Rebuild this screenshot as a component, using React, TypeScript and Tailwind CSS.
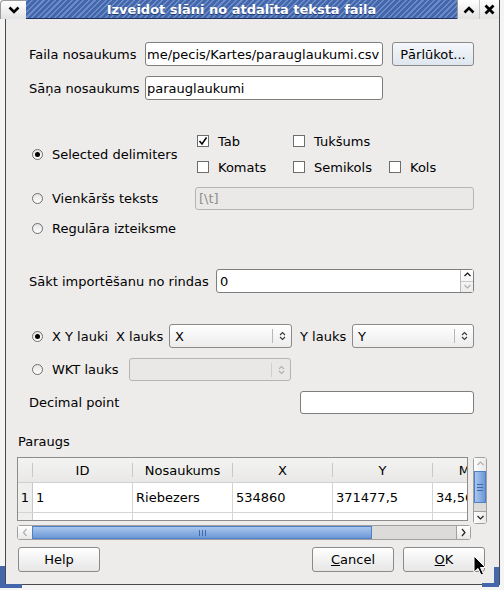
import React from "react"

function Radio({ checked = false }: { checked?: boolean }) {
  return (
    <span className="relative flex h-[11px] w-[11px] shrink-0 items-center justify-center rounded-full border border-[#6e6e6e] bg-gradient-to-b from-[#e4e4e4] to-white">
      {checked && <span className="h-[5px] w-[5px] rounded-full bg-black" />}
    </span>
  )
}

function Checkbox({ checked = false }: { checked?: boolean }) {
  return (
    <span className="flex h-[12px] w-[12px] shrink-0 items-center justify-center border border-[#6e6e6e] bg-white">
      {checked && (
        <svg width="10" height="10" viewBox="0 0 10 10">
          <path d="M1.5 5 L4 8 L8.5 1.5" stroke="#000" strokeWidth="1.5" fill="none" />
        </svg>
      )}
    </span>
  )
}

function UpDown({ color = "#3a3a3a" }: { color?: string }) {
  return (
    <svg width="7" height="10" viewBox="0 0 7 10">
      <path d="M1 4 L3.5 1.5 L6 4 M1 6 L3.5 8.5 L6 6" stroke={color} strokeWidth="1.1" fill="none" />
    </svg>
  )
}

function Combo({ value, width, disabled = false }: { value?: string; width: string; disabled?: boolean }) {
  return (
    <div
      className={`flex h-full items-center rounded-[3px] border ${width} ${
        disabled ? "border-[#b4b4b4] bg-[#e9e8e6]" : "border-[#8a8a8a] bg-gradient-to-b from-white to-[#ececec]"
      }`}
    >
      <span className="flex-1 pl-[5px]">{value}</span>
      <span className={`h-[14px] w-px ${disabled ? "bg-[#cfcfcf]" : "bg-[#b8b8b8]"}`} />
      <span className="flex w-[18px] justify-center">
        <UpDown color={disabled ? "#b0b0b0" : "#3a3a3a"} />
      </span>
    </div>
  )
}

function Button({ children, width = "w-[82px]", tint = false }: { children: React.ReactNode; width?: string; tint?: boolean }) {
  return (
    <div
      className={`flex h-full items-center justify-center rounded-[3px] border border-[#8a8a8a] ${width} ${
        tint ? "bg-gradient-to-b from-[#f4f7fb] to-[#dfe6ef]" : "bg-gradient-to-b from-white to-[#e6e6e6]"
      }`}
    >
      {children}
    </div>
  )
}

function Chevron({ dir, color = "#555" }: { dir: "up" | "down" | "left" | "right"; color?: string }) {
  const d = {
    up: "M1.5 5 L4.5 2 L7.5 5",
    down: "M1.5 3 L4.5 6 L7.5 3",
    left: "M5.5 1 L2.5 4.5 L5.5 8",
    right: "M3 1 L6 4.5 L3 8",
  }[dir]
  return (
    <svg width="9" height="9" viewBox="0 0 9 9">
      <path d={d} stroke={color} strokeWidth="1.2" fill="none" />
    </svg>
  )
}

function TitleBar() {
  return (
    <div className="flex h-[19px] w-[504px]">
      <div className="flex w-[26px] items-center justify-center rounded-tl-[4px] border-l border-t border-[#9a9a9a] bg-gradient-to-b from-white to-[#e2e2e2]">
        <svg width="12" height="8" viewBox="0 0 12 8">
          <path d="M1.5 1.5 L6 6 L10.5 1.5" stroke="#000" strokeWidth="2.6" fill="none" />
        </svg>
      </div>
      <div className="flex flex-1 items-center justify-center border-b border-[#1d2f5e] bg-[repeating-linear-gradient(135deg,#6b8cc9_0px,#6b8cc9_1.5px,#4466aa_1.5px,#4466aa_4px)]">
        <span className="text-[13px] font-bold text-white [text-shadow:0_1px_0_#223a70]">
          Izveidot slāni no atdalīta teksta faila
        </span>
      </div>
      <div className="flex w-[22px] items-center justify-center border-l border-[#9a9a9a] bg-gradient-to-b from-white to-[#e2e2e2]">
        <svg width="12" height="8" viewBox="0 0 12 8">
          <path d="M1.5 6.5 L6 2 L10.5 6.5" stroke="#000" strokeWidth="2.6" fill="none" />
        </svg>
      </div>
      <div className="flex w-[20px] items-center justify-center border-l border-[#c4c4c4] bg-gradient-to-b from-white to-[#e2e2e2]">
        <svg width="11" height="11" viewBox="0 0 11 11">
          <path d="M1.5 1.5 L9.5 9.5 M9.5 1.5 L1.5 9.5" stroke="#000" strokeWidth="2.8" fill="none" />
        </svg>
      </div>
      <div className="w-[5px] border-l border-[#4a4a4a] bg-[#f4f4f4]" />
    </div>
  )
}

const cols = [
  { head: "ID", cell: "1" },
  { head: "Nosaukums", cell: "Riebezers" },
  { head: "X", cell: "534860" },
  { head: "Y", cell: "371477,5" },
  { head: "Mērogs", cell: "34,5678" },
]

function Preview() {
  return (
    <div className="flex">
      <div className="ml-[11px] flex w-[454px] flex-col">
        <div className="h-[64px] w-[451px] overflow-hidden border border-[#8c8c8c] bg-white">
          <div className="flex h-[24px] bg-gradient-to-b from-[#f3f3f2] to-[#e9e8e6]">
            <div className="flex w-[15px] shrink-0 items-center justify-end">
              <span className="h-[14px] w-px bg-[#c8c8c8]" />
            </div>
            {cols.map((c) => (
              <div key={c.head} className="flex w-[100px] shrink-0 items-center">
                <span className="flex-1 text-center">{c.head}</span>
                <span className="h-[14px] w-px bg-[#c8c8c8]" />
              </div>
            ))}
          </div>
          <div className="flex h-[30px] border-t border-[#d0d0d0]">
            <div className="flex w-[15px] shrink-0 items-center justify-center border-r border-[#c8c8c8] bg-[#efefee]">1</div>
            {cols.map((c) => (
              <div key={c.head} className="flex w-[100px] shrink-0 items-center border-r border-[#d4d4d4] pl-[3px]">
                {c.cell}
              </div>
            ))}
          </div>
          <div className="flex h-[10px] border-t border-[#d4d4d4]">
            <div className="w-[15px] shrink-0 border-r border-[#c8c8c8] bg-[#efefee]" />
            {cols.map((c) => (
              <div key={c.head} className="w-[100px] shrink-0 border-r border-[#d4d4d4]" />
            ))}
          </div>
        </div>
        {/* horizontal scrollbar */}
        <div className="mt-[4px] flex h-[15px] w-[454px] rounded-[3px] border border-[#a0a0a0] bg-[#dcdbd9]">
          <div className="flex w-[14px] items-center justify-center bg-gradient-to-b from-white to-[#e8e8e8]">
            <Chevron dir="left" color="#b0b0b0" />
          </div>
          <div className="flex w-[340px] items-center justify-center border border-[#4f7fc6] bg-gradient-to-b from-[#a9c6ee] to-[#6d98d6]">
            <svg width="7" height="6" viewBox="0 0 7 6">
              <path d="M0.5 0 V6 M3.5 0 V6 M6.5 0 V6" stroke="#3d69ad" strokeWidth="1" />
            </svg>
          </div>
          <div className="flex-1" />
          <div className="flex w-[14px] items-center justify-center border-l border-[#a0a0a0] bg-gradient-to-b from-white to-[#e8e8e8]">
            <Chevron dir="right" color="#222" />
          </div>
        </div>
      </div>
      {/* vertical scrollbar */}
      <div className="ml-[2px] flex h-[67px] w-[14px] flex-col rounded-[3px] border border-[#a0a0a0] bg-[#dcdbd9]">
        <div className="flex h-[13px] items-center justify-center bg-gradient-to-r from-white to-[#e8e8e8]">
          <Chevron dir="up" color="#b0b0b0" />
        </div>
        <div className="flex h-[32px] items-center justify-center border border-[#4f7fc6] bg-gradient-to-r from-[#a9c6ee] to-[#6d98d6]">
          <svg width="6" height="7" viewBox="0 0 6 7">
            <path d="M0 0.5 H6 M0 3.5 H6 M0 6.5 H6" stroke="#3d69ad" strokeWidth="1" />
          </svg>
        </div>
        <div className="flex-1" />
        <div className="flex h-[12px] items-center justify-center border-t border-[#a0a0a0] bg-gradient-to-r from-white to-[#e8e8e8]">
          <Chevron dir="down" color="#222" />
        </div>
      </div>
    </div>
  )
}

export default function App() {
  return (
    <div className="relative h-[590px] w-[504px] overflow-hidden bg-[#f4f4f4] font-['DejaVu_Sans',sans-serif] text-[13px] leading-none text-black">
      <TitleBar />
      <div className="flex h-[571px]">
        <div className="w-[5px]" />
        <div className="flex h-[566px] w-[495px] flex-col border-x border-b border-[#4a4a4a] bg-[#edeceb]">
          {/* file name */}
          <div className="mt-[23px] flex h-[24px] items-center">
            <span className="ml-[23px] w-[116px]">Faila nosaukums</span>
            <div className="flex h-full w-[238px] items-center overflow-hidden whitespace-nowrap rounded-[3px] border border-[#7e7e7e] bg-white pl-[1px]">
              me/pecis/Kartes/parauglaukumi.csv
            </div>
            <div className="ml-[9px] h-full">
              <Button tint>Pārlūkot...</Button>
            </div>
          </div>

          {/* layer name */}
          <div className="mt-[10px] flex h-[24px] items-center">
            <span className="ml-[23px] w-[116px]">Sāņa nosaukums</span>
            <div className="flex h-full w-[238px] items-center rounded-[3px] border border-[#7e7e7e] bg-white pl-[1px]">
              parauglaukumi
            </div>
          </div>

          {/* delimiters */}
          <div className="mt-[31px] flex h-[46px] items-center">
            <div className="ml-[26px] flex w-[165px] items-center gap-[9px]">
              <Radio checked />
              <span>Selected delimiters</span>
            </div>
            <div className="grid grid-cols-[96px_96px_auto] grid-rows-[20px_20px] gap-y-[6px]">
              {[
                ["Tab", true],
                ["Tukšums", false],
                ["", false],
                ["Komats", false],
                ["Semikols", false],
                ["Kols", false],
              ].map(([label, on], i) =>
                label ? (
                  <div key={i} className="flex items-center gap-[9px]">
                    <Checkbox checked={on as boolean} />
                    <span>{label}</span>
                  </div>
                ) : (
                  <div key={i} />
                )
              )}
            </div>
          </div>

          <div className="mt-[10px] flex h-[23px] items-center">
            <div className="ml-[26px] flex w-[163px] items-center gap-[9px]">
              <Radio />
              <span>Vienkāršs teksts</span>
            </div>
            <div className="flex h-full w-[279px] items-center rounded-[3px] border border-[#b4b4b4] bg-[#eae9e7] pl-[3px] text-[#8e8e8e]">
              [\t]
            </div>
          </div>

          <div className="mt-[8px] flex h-[20px] items-center">
            <div className="ml-[26px] flex items-center gap-[9px]">
              <Radio />
              <span>Regulāra izteiksme</span>
            </div>
          </div>

          {/* start row */}
          <div className="mt-[31px] flex h-[24px] items-center">
            <span className="ml-[23px] w-[187px]">Sākt importēšanu no rindas</span>
            <div className="flex h-full w-[258px] rounded-[3px] border border-[#7e7e7e] bg-white">
              <span className="flex flex-1 items-center pl-[3px]">0</span>
              <div className="flex w-[13px] flex-col border-l border-[#b8b8b8] bg-gradient-to-b from-white to-[#ececec]">
                <div className="flex flex-1 items-center justify-center border-b border-[#c8c8c8]">
                  <Chevron dir="up" color="#111" />
                </div>
                <div className="flex flex-1 items-center justify-center">
                  <Chevron dir="down" color="#b0b0b0" />
                </div>
              </div>
            </div>
          </div>

          {/* geometry */}
          <div className="mt-[31px] flex h-[24px] items-center">
            <div className="ml-[26px] flex w-[84px] items-center gap-[9px]">
              <Radio checked />
              <span>X Y lauki</span>
            </div>
            <span className="w-[53px]">X lauks</span>
            <Combo value="X" width="w-[123px]" />
            <span className="ml-[8px] w-[52px]">Y lauks</span>
            <Combo value="Y" width="w-[122px]" />
          </div>

          <div className="mt-[10px] flex h-[23px] items-center">
            <div className="ml-[26px] flex w-[97px] items-center gap-[9px]">
              <Radio />
              <span>WKT lauks</span>
            </div>
            <Combo width="w-[162px]" disabled />
          </div>

          <div className="mt-[10px] flex h-[23px] items-center">
            <span className="ml-[23px] w-[271px]">Decimal point</span>
            <div className="h-full w-[174px] rounded-[3px] border border-[#7e7e7e] bg-white" />
          </div>

          <div className="mt-[19px] flex h-[16px] items-center">
            <span className="ml-[12px]">Paraugs</span>
          </div>

          <div className="mt-[8px]">
            <Preview />
          </div>

          {/* dialog buttons */}
          <div className="mt-[7px] flex h-[25px]">
            <div className="ml-[12px] h-full">
              <Button>Help</Button>
            </div>
            <div className="ml-auto h-full">
              <Button>
                <span>
                  <span className="underline">C</span>ancel
                </span>
              </Button>
            </div>
            <div className="ml-[9px] mr-[14px] h-full">
              <Button>
                <span>
                  <span className="underline">O</span>K
                </span>
              </Button>
            </div>
          </div>
        </div>
      </div>

      {/* window resize corners */}
      <div className="absolute bottom-[2px] left-0 h-[22px] w-[5px] bg-[#4466aa]" />
      <div className="absolute bottom-[2px] left-0 h-[4px] w-[22px] bg-[#4466aa]" />
      <div className="absolute bottom-[3px] left-[482px] h-[4px] w-[17px] bg-[#4466aa]" />
      <div className="absolute bottom-[3px] left-[494px] h-[20px] w-[5px] bg-[#4466aa]" />

      {/* mouse pointer */}
      <svg className="absolute left-[473px] top-[555px]" width="14" height="22" viewBox="0 0 14 22">
        <path d="M1 1 L1 17 L5 13.5 L8 20 L10.5 19 L7.5 12.5 L12.5 12.5 Z" fill="#000" stroke="#fff" strokeWidth="1" />
      </svg>
    </div>
  )
}
